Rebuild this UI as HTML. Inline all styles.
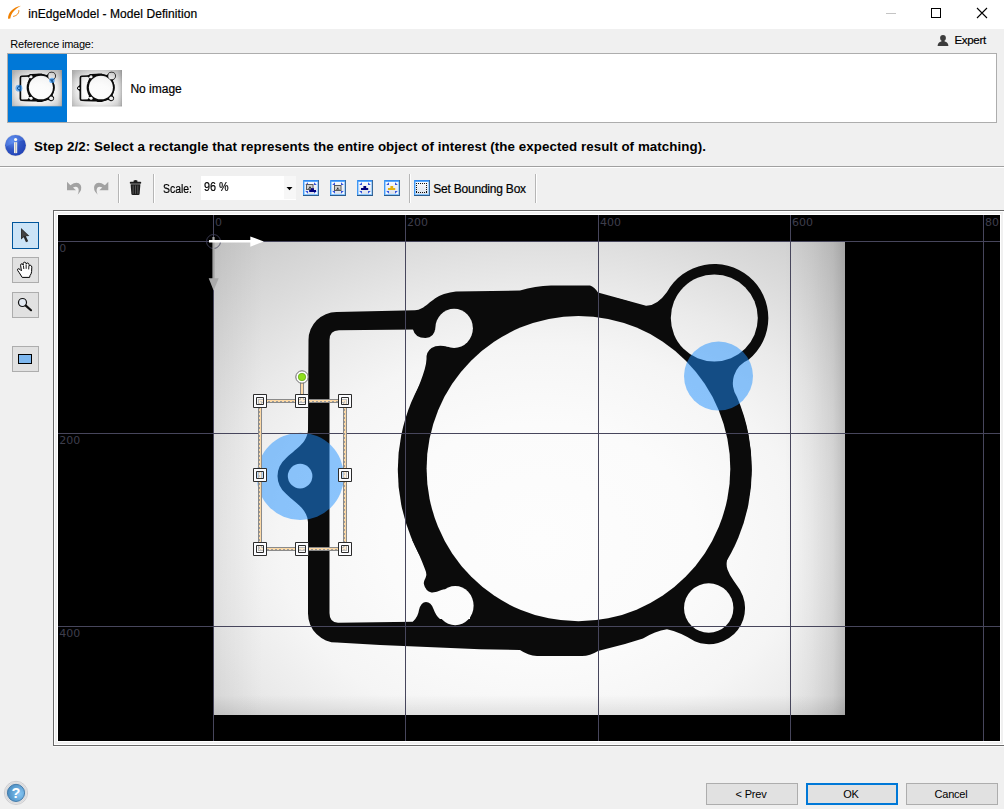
<!DOCTYPE html>
<html lang="en">
<head>
<meta charset="utf-8">
<title>inEdgeModel - Model Definition</title>
<style>
html,body{margin:0;padding:0;}
body{width:1004px;height:809px;overflow:hidden;background:#f0f0f0;position:relative;
 font-family:"Liberation Sans",sans-serif;font-size:12px;color:#000;}
.abs{position:absolute;}
.t{position:absolute;white-space:nowrap;line-height:1;}
.sg{-webkit-text-stroke:0.2px #000;}
#titlebar{left:0;top:0;width:1004px;height:29px;background:#fff;}
#listbox{left:7px;top:53px;width:988px;height:68px;background:#fff;border:1px solid #adadad;}
#sel{left:8px;top:54px;width:59px;height:68px;background:#0078d7;}
#infosep{left:0;top:166px;width:1004px;height:1px;background:#a0a0a0;}
#infosep2{left:0;top:167px;width:1004px;height:1px;background:#fff;}
.vsep{position:absolute;width:1px;background:#b6b6b6;top:174px;height:29px;border-right:1px solid #fff;}
.btn{position:absolute;box-sizing:border-box;height:22px;top:783px;width:92px;background:#e1e1e1;border:1px solid #adadad;
 font-size:11px;text-align:center;line-height:20px;padding-right:2px;letter-spacing:-0.2px;}
#canvasframe{left:53px;top:210px;width:951px;height:536px;background:#fff;box-sizing:border-box;border-left:1px solid #696969;border-top:1px solid #696969;border-bottom:1px solid #696969;}
.tool{position:absolute;left:12px;width:27px;height:26px;box-sizing:border-box;border:1px solid #adadad;background:#e1e1e1;}
</style>
</head>
<body>
<div id="titlebar" class="abs"></div>
<div id="title" class="t sg" style="left:28.3px;top:7.5px;font-size:12px;letter-spacing:0.07px;">inEdgeModel - Model Definition</div>

<div id="reflabel" class="t" style="left:10.3px;top:38.5px;font-size:11px;letter-spacing:-0.22px;">Reference image:</div>
<div id="expert" class="t sg" style="left:954.4px;top:35.2px;font-size:11.5px;letter-spacing:-0.3px;">Expert</div>
<div id="listbox" class="abs"></div>
<div id="sel" class="abs"></div>
<svg id="thumbs" class="abs" style="left:8px;top:54px;" width="120" height="68" viewBox="8 54 120 68">
<defs>
<radialGradient id="tvig" cx="0.5" cy="0.5" r="0.62"><stop offset="0.5" stop-color="#000" stop-opacity="0"/><stop offset="1" stop-color="#000" stop-opacity="0.13"/></radialGradient>
</defs>
<g transform="translate(12 70) scale(0.07911 0.0772) translate(-213 -241)">
<use href="#gimg"/>
<circle cx="300.3" cy="476.4" r="43.6" fill="#1e90ff" fill-opacity="0.6"/>
<circle cx="718.5" cy="376.1" r="34.5" fill="#1e90ff" fill-opacity="0.6"/>
</g>
<rect x="12" y="70" width="50" height="36.6" fill="url(#tvig)"/>
<g transform="translate(72 70) scale(0.07911 0.0772) translate(-213 -241)">
<use href="#gimg"/>
</g>
<rect x="72" y="70" width="50" height="36.6" fill="url(#tvig)"/>
</svg>
<div id="noimage" class="t sg" style="left:130.4px;top:83px;font-size:12px;">No image</div>

<div id="step" class="t" style="left:34px;top:140px;font-size:13.33px;font-weight:bold;letter-spacing:0.07px;">Step 2/2: Select a rectangle that represents the entire object of interest (the expected result of matching).</div>
<div id="infosep" class="abs"></div>
<div id="infosep2" class="abs"></div>

<div class="vsep" style="left:118px"></div>
<div class="vsep" style="left:153px"></div>
<div class="vsep" style="left:409px"></div>
<div class="vsep" style="left:535px"></div>
<div id="scalelbl" class="t sg" style="left:163px;top:182.5px;font-size:12px;transform-origin:0 0;transform:scaleX(0.87);">Scale:</div>
<div id="combo" class="abs" style="left:201px;top:176px;width:95px;height:23.5px;background:#fff;"></div>
<div id="scaleval" class="t sg" style="left:204px;top:180.7px;font-size:12px;transform-origin:0 0;transform:scaleX(0.9);">96 %</div>
<div id="setbb" class="t sg" style="left:433.2px;top:183px;font-size:12px;letter-spacing:-0.21px;">Set Bounding Box</div>

<div class="tool" style="top:222px;height:27px;background:#cce4f7;border-color:#00559b;"></div>
<div class="tool" style="top:257px;"></div>
<div class="tool" style="top:292px;"></div>
<div class="tool" style="top:346px;"></div>

<div id="canvasframe" class="abs"></div>
<div class="abs" style="left:55px;top:212px;width:948px;height:532px;background:#f0f0f0;"></div>
<div class="abs" style="left:57px;top:214px;width:944px;height:528px;background:#fff;"></div>
<div class="abs" style="left:53px;top:746px;width:951px;height:1px;background:#fafafa;"></div>
<!--CANVAS-START-->
<svg id="cv" class="abs" style="left:58px;top:215px;" width="942" height="526" viewBox="58 215 942 526">
<defs>
<radialGradient id="vig" gradientUnits="userSpaceOnUse" cx="540" cy="540" r="520" gradientTransform="translate(540 540) scale(1 0.75) translate(-540 -540)">
 <stop offset="0" stop-color="#fdfdfd"/>
 <stop offset="0.3" stop-color="#fbfbfb"/>
 <stop offset="0.5" stop-color="#f5f5f5"/>
 <stop offset="0.65" stop-color="#eaeaea"/>
 <stop offset="0.8" stop-color="#dbdbdb"/>
 <stop offset="1" stop-color="#c8c8c8"/>
</radialGradient>
<linearGradient id="edgeB" gradientUnits="userSpaceOnUse" x1="0" y1="715" x2="0" y2="695">
 <stop offset="0" stop-color="#000" stop-opacity="0.09"/><stop offset="1" stop-color="#000" stop-opacity="0"/>
</linearGradient>
<linearGradient id="edgeL" gradientUnits="userSpaceOnUse" x1="213" y1="0" x2="263" y2="0">
 <stop offset="0" stop-color="#000" stop-opacity="0.05"/><stop offset="0.4" stop-color="#000" stop-opacity="0.03"/><stop offset="1" stop-color="#000" stop-opacity="0"/>
</linearGradient>
<linearGradient id="edgeR" gradientUnits="userSpaceOnUse" x1="845" y1="0" x2="785" y2="0">
 <stop offset="0" stop-color="#000" stop-opacity="0.2"/><stop offset="0.2" stop-color="#000" stop-opacity="0.11"/><stop offset="0.55" stop-color="#000" stop-opacity="0.05"/><stop offset="1" stop-color="#000" stop-opacity="0"/>
</linearGradient>
<mask id="gm" maskUnits="userSpaceOnUse" x="213" y="241" width="632" height="474">
 <g>
 <rect x="213" y="241" width="632" height="474" fill="#000"/>
 <!-- silhouette -->
 <path fill="#fff" d="M308.5 340 A28 28 0 0 1 336.5 312 L415 310.3 C425 310 430 299 444 294 Q450 292 456 291.5 L520 290.5 Q535 286 551 285.5 L590 285.5 Q594.5 287 598 292.5 L646 305.8 Q657 306 667 292 A54 54 0 1 1 748.5 359.8 A25.2 25.2 0 0 0 737 397 A177 177 0 0 1 730 552 C727.5 557 725.3 563 727.5 569.5 Q729.5 575 733.5 580.5 L737 585.5 A36 36 0 0 1 694.7 641.2 Q680 632 667 629.2 Q655 631 643 638.5 L625 644 L598 651 Q590 656 582 656 L537 656 Q528 655.5 520 650 L480 649.3 L380 645 L337 642.6 A29 29 0 0 1 308 613.6 L308 522 C307 508 295 503 285.5 493.2 A22.5 22.5 0 0 1 285.5 458.8 C295 449 307 444 308 430 Z"/>
 <!-- frame inner hole -->
 <path fill="#000" d="M329.5 340 Q329.5 330.5 339 330.3 L470 329 L470 621 L338 622.7 Q329.5 622.5 329.5 613 Z"/>
 <!-- ring disk -->
 <circle cx="574.8" cy="470" r="177" fill="#fff"/>
 <!-- bulbs on ring's left ends -->
 <path fill="#fff" d="M447 346.5 Q437 344.5 431.5 348 Q426 352 426.5 359 C426.3 371 416.4 390.7 409.5 409.5 L450 410 L462 347 Z"/>
 <path fill="#fff" d="M453 586 L449.4 587.4 Q445 589 441.4 590 Q436 592.8 431.4 592.4 Q425.5 591 424 584.5 Q423.2 582 425.5 578 Q427 575 426 572 C424 566 420 556 412.2 540 L450 538 L462 586 Z"/>
 <!-- protrusions -->
 <path fill="#fff" d="M409 320 L413 329.5 Q415 338 425.5 338 Q434.4 337.6 435.3 328.3 L437 318 L475 318 L475 313 L409 313 Z"/>
 <path fill="#fff" d="M409 630 L413 621.5 Q418 617 419 610 Q421 602 426 602 Q431 602 433.5 609 Q436 616 440 619 L476 619 L476 640 L409 640 Z"/>
 <!-- small holes -->
 <ellipse cx="454.1" cy="328.3" rx="18.8" ry="19.6" fill="#000"/>
 <ellipse cx="455.2" cy="605.7" rx="18.4" ry="19.6" fill="#000"/>
 <!-- holes -->
 <ellipse cx="578.45" cy="468.65" rx="151.85" ry="152.65" fill="#000"/>
 <circle cx="714.3" cy="318" r="43.5" fill="#000"/>
 <circle cx="708.7" cy="608" r="24.7" fill="#000"/>
 <circle cx="300.1" cy="476.1" r="12.3" fill="#000"/>
 </g>
</mask>
<clipPath id="imgclip"><rect x="213" y="241" width="632" height="474"/></clipPath>
</defs>
<rect x="58" y="215" width="942" height="526" fill="#000"/>
<g id="gimg" clip-path="url(#imgclip)">
<rect x="213" y="241" width="632" height="474" fill="url(#vig)"/>
<rect x="213" y="241" width="50" height="474" fill="url(#edgeL)"/>
<rect x="785" y="241" width="60" height="474" fill="url(#edgeR)"/>
<rect x="213" y="690" width="632" height="25" fill="url(#edgeB)"/>
<rect x="213" y="241" width="632" height="474" fill="#0b0b0b" mask="url(#gm)"/>
</g>
<!-- blue markers -->
<circle cx="300.3" cy="476.4" r="43.6" fill="#1e90ff" fill-opacity="0.5"/>
<circle cx="718.5" cy="376.1" r="34.5" fill="#1e90ff" fill-opacity="0.5"/>
<!-- grid -->
<g stroke="#47465c" stroke-width="1" shape-rendering="crispEdges">
<line x1="213.5" y1="215" x2="213.5" y2="741"/>
<line x1="405.5" y1="215" x2="405.5" y2="741"/>
<line x1="598.5" y1="215" x2="598.5" y2="741"/>
<line x1="790.5" y1="215" x2="790.5" y2="741"/>
<line x1="983.5" y1="215" x2="983.5" y2="741"/>
<line x1="58" y1="241.5" x2="1000" y2="241.5"/>
<line x1="58" y1="433.5" x2="1000" y2="433.5"/>
<line x1="58" y1="626.5" x2="1000" y2="626.5"/>
</g>
<g font-family="'DejaVu Sans','Liberation Sans',sans-serif" font-size="11" fill="#3e3e4c">
<text x="215" y="226">0</text>
<text x="407" y="226">200</text>
<text x="600" y="226">400</text>
<text x="792" y="226">600</text>
<text x="985" y="226">80</text>
<text x="59.3" y="252">0</text>
<text x="59.3" y="444">200</text>
<text x="59.3" y="637">400</text>
</g>
<!-- origin / axes -->
<g>
<circle cx="213.5" cy="241.5" r="7" fill="none" stroke="#44445e" stroke-width="0.8"/>
<rect x="212.4" y="237" width="2.2" height="43" fill="#a4a4a4"/>
<path d="M208.7 278.3 L218.7 278.3 L213.6 290.5 Z" fill="#aaaaaa"/>
<rect x="209" y="240" width="43" height="2.5" fill="#fff"/>
<path d="M250.3 236.5 L250.3 246.7 L263.8 241.4 Z" fill="#fff"/>
</g>
<!-- selection rectangle -->
<g id="selrect">
<g stroke="#8a8a8a" stroke-width="4" fill="none">
<path d="M260 401 H345 V549 H260 Z M302 377 V401"/>
</g>
<g stroke="#fcd9a6" stroke-width="2" fill="none">
<path d="M260 401 H345 V549 H260 Z M302 377 V401"/>
</g>
<g stroke="#9c9c9c" stroke-width="1" fill="none" stroke-dasharray="2 2">
<path d="M260 401.5 H345 M344.5 401 V549 M345 549.5 H260 M259.5 549 V401"/>
</g>
<path d="M253.5 394.5h13v13h-13Z M256.5 397.5v7h7v-7Z" fill="#fbfcff" fill-rule="evenodd" stroke="#2c2c2c" stroke-width="1"/><rect x="257" y="398" width="6" height="6" fill="#fff" fill-opacity="0.45"/>
<path d="M295.5 394.5h13v13h-13Z M298.5 397.5v7h7v-7Z" fill="#fbfcff" fill-rule="evenodd" stroke="#2c2c2c" stroke-width="1"/><rect x="299" y="398" width="6" height="6" fill="#fff" fill-opacity="0.45"/>
<path d="M338.5 394.5h13v13h-13Z M341.5 397.5v7h7v-7Z" fill="#fbfcff" fill-rule="evenodd" stroke="#2c2c2c" stroke-width="1"/><rect x="342" y="398" width="6" height="6" fill="#fff" fill-opacity="0.45"/>
<path d="M253.5 468.5h13v13h-13Z M256.5 471.5v7h7v-7Z" fill="#fbfcff" fill-rule="evenodd" stroke="#2c2c2c" stroke-width="1"/><rect x="257" y="472" width="6" height="6" fill="#fff" fill-opacity="0.45"/>
<path d="M338.5 468.5h13v13h-13Z M341.5 471.5v7h7v-7Z" fill="#fbfcff" fill-rule="evenodd" stroke="#2c2c2c" stroke-width="1"/><rect x="342" y="472" width="6" height="6" fill="#fff" fill-opacity="0.45"/>
<path d="M253.5 542.5h13v13h-13Z M256.5 545.5v7h7v-7Z" fill="#fbfcff" fill-rule="evenodd" stroke="#2c2c2c" stroke-width="1"/><rect x="257" y="546" width="6" height="6" fill="#fff" fill-opacity="0.45"/>
<path d="M295.5 542.5h13v13h-13Z M298.5 545.5v7h7v-7Z" fill="#fbfcff" fill-rule="evenodd" stroke="#2c2c2c" stroke-width="1"/><rect x="299" y="546" width="6" height="6" fill="#fff" fill-opacity="0.45"/>
<path d="M338.5 542.5h13v13h-13Z M341.5 545.5v7h7v-7Z" fill="#fbfcff" fill-rule="evenodd" stroke="#2c2c2c" stroke-width="1"/><rect x="342" y="546" width="6" height="6" fill="#fff" fill-opacity="0.45"/>
<circle cx="302" cy="377" r="6.2" fill="#fff" stroke="#6c6c6c" stroke-width="1"/>
<circle cx="302" cy="377" r="3.7" fill="#8ee01c" stroke="#6aa61a" stroke-width="0.8"/>
</g>
</svg>
<!--CANVAS-END-->

<!--ICONS-START-->
<svg id="icons" class="abs" style="left:0;top:0;" width="1004" height="809" viewBox="0 0 1004 809">
<defs>
<linearGradient id="icbg" x1="0" y1="0" x2="0" y2="1"><stop offset="0" stop-color="#ffffff"/><stop offset="1" stop-color="#d6dde8"/></linearGradient>
<radialGradient id="infog" cx="0.35" cy="0.3" r="0.8"><stop offset="0" stop-color="#5c8cf0"/><stop offset="0.5" stop-color="#3157c4"/><stop offset="1" stop-color="#1f3fb4"/></radialGradient>
<radialGradient id="helpg" cx="0.7" cy="0.55" r="0.7"><stop offset="0" stop-color="#86c6f4"/><stop offset="1" stop-color="#4a8cc0"/></radialGradient>
<g id="frameicon" shape-rendering="crispEdges">
 <rect x="0" y="0" width="16" height="16" fill="url(#icbg)"/>
 <rect x="0" y="0" width="16" height="1" fill="#2f88ee"/><rect x="0" y="1" width="16" height="1" fill="#58a8fc"/>
 <rect x="0" y="0" width="1" height="16" fill="#4298f4"/><rect x="1" y="2" width="1" height="13" fill="#a4d2fe"/>
 <rect x="15" y="0" width="1" height="16" fill="#3a6898"/><rect x="14" y="2" width="1" height="13" fill="#a4d2fe"/>
 <rect x="1" y="14" width="14" height="1" fill="#86c4fc"/><rect x="0" y="15" width="16" height="1" fill="#2c5a8a"/>
</g>
<g id="corners">
 <g fill="#f6f9ff"><rect x="2" y="2" width="3" height="3"/><rect x="11" y="2" width="3" height="3"/><rect x="2" y="11" width="3" height="3"/><rect x="11" y="11" width="3" height="3"/></g>
 <g fill="#3454dc"><path d="M2.2 5 L5 2.2 L5 5 Z"/><path d="M13.8 5 L11 2.2 L11 5 Z"/>
 <path d="M2.2 11 L5 13.8 L5 11 Z"/><path d="M13.8 11 L11 13.8 L11 11 Z"/></g>
</g>
</defs>
<!-- app icon -->
<path d="M8 18.8 C8 12.6 13 7.4 21 5.8 C15 8.8 11.2 13 10.3 18.6 Z" fill="#f08000"/>
<path d="M18.8 10.2 C19.2 13.2 16.8 15.8 13.2 16.4" fill="none" stroke="#f08000" stroke-width="1"/>
<!-- window buttons -->
<rect x="886" y="13" width="10" height="1" fill="#c4c4c4"/>
<rect x="931.5" y="8.5" width="9" height="9" fill="none" stroke="#000" stroke-width="1"/>
<path d="M977 8 L987 18 M987 8 L977 18" stroke="#000" stroke-width="1.1" fill="none"/>
<!-- person -->
<g fill="#3c3c3c">
<circle cx="943" cy="38" r="2.9"/>
<path d="M937.6 46 Q937.8 42.2 941.3 41.6 L941.8 40 L944.2 40 L944.7 41.6 Q948.2 42.2 948.4 46 Z"/>
</g>
<!-- info icon -->
<circle cx="15.5" cy="145.4" r="10.9" fill="#d8d4cc" opacity="0.6"/>
<circle cx="15.5" cy="145.3" r="10.4" fill="url(#infog)"/>
<path d="M5.4 147 A10.3 10.3 0 0 1 24.5 140 Q14 142 5.4 147 Z" fill="#6a98f4" opacity="0.35"/>
<circle cx="15.6" cy="139.5" r="1.6" fill="#fffef4"/>
<rect x="14" y="142.2" width="3.2" height="10.9" fill="#f0f0ea"/>
<rect x="15" y="142.2" width="1.2" height="10.9" fill="#c4c4c0"/>
<!-- undo / redo -->
<path id="undo" d="M67 181.8 L67 190.3 L76 190.3 L73 187.6 Q76 185.6 78 187.8 Q79.6 190.4 77.6 194.8 Q83 189.4 80.6 185 Q77.4 180.4 70.4 185.2 Z" fill="#a2a2a2"/>
<path d="M67 181.8 L67 190.3 L76 190.3 L73 187.6 Q76 185.6 78 187.8 Q79.6 190.4 77.6 194.8 Q83 189.4 80.6 185 Q77.4 180.4 70.4 185.2 Z" fill="#a2a2a2" transform="translate(175.3 0) scale(-1 1)"/>
<!-- trash -->
<g fill="#1c1c1c">
<path d="M133.6 182 L133.6 180.6 Q135.5 179.2 137.4 180.6 L137.4 182 Z"/>
<rect x="129.8" y="181.8" width="11.4" height="2" rx="0.8"/>
<path d="M130.6 184.2 L140.4 184.2 L139.6 194 Q139.4 195 138.4 195 L132.6 195 Q131.6 195 131.4 194 Z"/>
</g>
<g fill="#5c5c5c"><rect x="132.7" y="185.4" width="0.9" height="8.4"/><rect x="135.05" y="185.4" width="0.9" height="8.4"/><rect x="137.4" y="185.4" width="0.9" height="8.4"/></g>
<!-- combo arrow -->
<rect x="284" y="176" width="12" height="23" fill="#f7f7f7"/>
<path d="M286.5 187 L292.5 187 L289.5 190.2 Z" fill="#000"/>
<!-- four frame icons -->
<g transform="translate(303 180)"><use href="#frameicon"/><use href="#corners"/>
 <rect x="3.5" y="4.5" width="6.5" height="5" fill="#cfcfcf" stroke="#5a5a5a" stroke-width="1"/>
 <path d="M5 8 L6 8 L6.6 6.6 L7.4 6.6 L8 8 L9 8 L9 8.6 L5 8.6 Z" fill="#222"/>
 <path d="M8 8.3 L11 8.3 L11 10 L13 10 L13 12 L6.2 12 L6.2 10 L8 10 Z" fill="#00007c"/>
</g>
<g transform="translate(330 180)"><use href="#frameicon"/><use href="#corners"/>
 <rect x="4.5" y="5.5" width="6.5" height="5" fill="#cfcfcf" stroke="#5a5a5a" stroke-width="1"/>
 <path d="M6 9 L7 9 L7.4 7.4 L8.2 7.4 L8.6 9 L9.6 9 L9.6 9.6 L6 9.6 Z" fill="#222"/>
</g>
<g transform="translate(357 180)"><use href="#frameicon"/><use href="#corners"/>
 <path d="M6.4 6 H9.2 V7.9 H11.2 V10 H4 V7.9 H6.4 Z" fill="#00007c"/>
</g>
<g transform="translate(384 180)"><use href="#frameicon"/><use href="#corners"/>
 <path d="M6.4 6 H9.2 V7.9 H11.2 V10 H4 V7.9 H6.4 Z" fill="#e2b010"/>
</g>
<!-- set bounding box icon -->
<g transform="translate(414 180)"><use href="#frameicon"/>
 <path d="M2 3.5 H13 M2 12.5 H13 M2.5 3 V13 M12.5 3 V13" fill="none" stroke="#111" stroke-width="1" stroke-dasharray="1 1" shape-rendering="crispEdges"/>
</g>
<!-- tool icons -->
<path d="M21 228 L21 239.6 L23.7 237.2 L26 242.2 L28.2 241.2 L25.9 236.3 L29.4 236 Z" fill="#2a2a2a"/>
<path d="M21.6 229.6 L21.6 238.2 L24 236 L25 236 L28 235.6 Z" fill="#555" opacity="0.6"/>
<!-- hand -->
<path d="M22.2 277.4 L19.2 272.6 Q17 270.2 17.6 269.2 Q18.6 268 20.2 269.6 L21.4 270.8 L20.6 265.2 Q20.6 263.8 21.8 263.8 Q22.8 263.8 23.2 265 L23.2 263.4 Q23.4 262.2 24.6 262.2 Q25.8 262.2 26 263.4 L26.2 264 Q26.6 262.8 27.8 263 Q28.8 263.2 29 264.4 L29.2 265.8 Q29.8 265 30.8 265.4 Q31.8 265.8 31.8 267.2 L31.6 271.6 Q31.4 274 30 275.6 L29.6 277.4 Z" fill="#fff" stroke="#000" stroke-width="1" stroke-linejoin="round"/>
<path d="M23.4 265.4 L23.8 269 M26.1 264.4 L26.2 268.8 M28.9 265.8 L28.7 269.4" stroke="#000" stroke-width="0.9" fill="none"/>
<!-- magnifier -->
<circle cx="22.5" cy="302.5" r="4" fill="#e4ebf4" stroke="#111" stroke-width="1.2"/>
<path d="M25.8 305.6 L31 310.2" stroke="#111" stroke-width="2.2" stroke-linecap="round"/>
<!-- rect tool -->
<rect x="18.5" y="354.5" width="13" height="9" fill="#7db7ef" stroke="#000" stroke-width="1"/>
<!-- help -->
<circle cx="16" cy="792.9" r="11.6" fill="#ececec" stroke="#c4c4c8" stroke-width="0.8"/>
<circle cx="16" cy="792.9" r="10" fill="none" stroke="#dadadc" stroke-width="1.4"/>
<circle cx="16" cy="792.9" r="8.6" fill="url(#helpg)" stroke="#3c74a4" stroke-width="0.9"/>
<text x="16" y="798" text-anchor="middle" font-family="'Liberation Sans',sans-serif" font-weight="bold" font-size="14.5" fill="#fff">?</text>
</svg>
<!--ICONS-END-->
<div id="bprev" class="btn" style="left:706px;">&lt; Prev</div>
<div id="bok" class="btn" style="left:806px;border:2px solid #0078d7;line-height:18px;">OK</div>
<div id="bcancel" class="btn" style="left:906px;">Cancel</div>
</body>
</html>
